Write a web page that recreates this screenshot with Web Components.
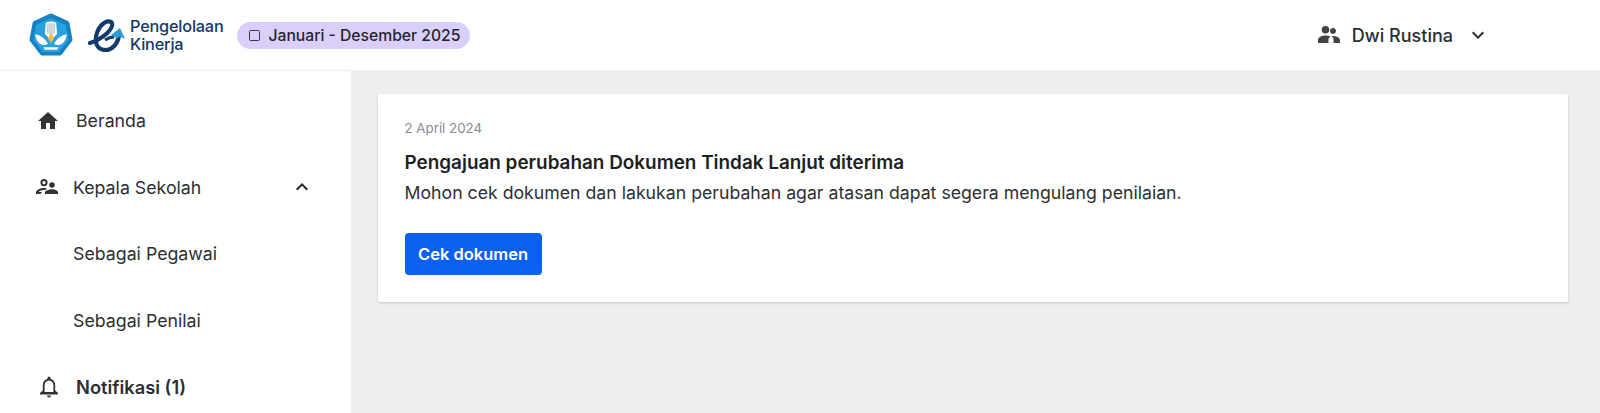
<!DOCTYPE html>
<html lang="id">
<head>
<meta charset="utf-8">
<title>Pengelolaan Kinerja</title>
<style>
  html, body { margin: 0; height: 100%; overflow: hidden; }
  body { font-family: Inter, "Liberation Sans", sans-serif; color: #26282b; background: #eee; }
</style>
</head>
<body>
<app-shell>
  <app-header slot="header"></app-header>
  <side-nav slot="nav">
    <nav-item icon="home" indent="36" gap="16">Beranda</nav-item>
    <nav-item icon="people-outline" indent="35" gap="14" chevron>Kepala Sekolah</nav-item>
    <nav-item indent="73">Sebagai Pegawai</nav-item>
    <nav-item indent="73">Sebagai Penilai</nav-item>
    <nav-item icon="bell" indent="37" gap="15" strong>Notifikasi (1)</nav-item>
  </side-nav>
  <notif-card slot="main"
    date="2 April 2024"
    title="Pengajuan perubahan Dokumen Tindak Lanjut diterima"
    action="Cek dokumen">Mohon cek dokumen dan lakukan perubahan agar atasan dapat segera mengulang penilaian.</notif-card>
</app-shell>

<script>
const ICONS = {
  home: '<path d="M10 20v-6h4v6h5v-8h3L12 3 2 12h3v8z"/>',
  'people-outline': '<path d="M9 4a3.6 3.6 0 1 1 0 7.2A3.6 3.6 0 0 1 9 4zm0 2a1.6 1.6 0 1 0 0 3.2A1.6 1.6 0 0 0 9 6zM17 7.2a2.8 2.8 0 1 1 0 5.6 2.8 2.8 0 0 1 0-5.6zM9 13c1.2 0 2.400.2 3.400.6-.9.5-1.600 1-2.100 1.500C9.900 15 9.500 15 9 15c-2.200 0-4.300.8-5.500 2H7l-1.500 2H1v-1.500C1 14.900 5.500 13 9 13zM17 14.200c2.800 0 6 1.300 6 3.100V19H10v-1.700c0-1.800 4.200-3.100 7-3.100z"/>',
  people: '<path d="M16 11c1.700 0 3-1.400 3-3s-1.300-3-3-3-3 1.400-3 3 1.300 3 3 3zM8.500 10.500a3.800 3.800 0 1 0 0-7.600 3.800 3.800 0 0 0 0 7.600zM8.500 12.500C5.600 12.500 1 14 1 16.800V20h10.500v-3.200c0-1.300.7-2.400 2-3.200-1.800-.8-3.700-1.100-5-1.100zM16 13c-.4 0-.9 0-1.300.1 1 .9 1.800 2 1.800 3.700V20H23v-3.200C23 14.400 18.600 13 16 13z"/>',
  bell: '<path fill-rule="evenodd" d="M12 1.500a1.500 1.500 0 0 1 1.500 1.500v.8c3 .7 4.700 3.400 4.700 6.500v5.200L21 18v1.500H3V18l2.800-2.500v-5.200c0-3.100 1.700-5.800 4.700-6.500V3A1.500 1.500 0 0 1 12 1.500zm0 4c-2.800 0-4.400 2.200-4.400 4.800v6.700h8.800v-6.700c0-2.600-1.600-4.800-4.400-4.800z"/><path d="M10 20.500h4a2 2 0 0 1-4 0z"/>',
  up: '<path d="M12 8l-6 6 1.400 1.400L12 10.800l4.600 4.600L18 14z"/>',
  down: '<path d="M12 16l6-6-1.400-1.400L12 13.200 7.400 8.600 6 10z"/>'
};
const svgIcon = (name, size) =>
  `<svg width="${size}" height="${size}" viewBox="0 0 24 24" fill="currentColor" aria-hidden="true">${ICONS[name]}</svg>`;

class AppShell extends HTMLElement {
  constructor() {
    super();
    this.attachShadow({ mode: 'open' }).innerHTML = `
      <style>
        :host { display: grid; grid-template: 71px 1fr / 351px 1fr; height: 413px; }
        .top { grid-column: 1 / -1; }
        .main { padding: 23px 32px 0 27px; }
      </style>
      <div class="top"><slot name="header"></slot></div>
      <div><slot name="nav"></slot></div>
      <div class="main"><slot name="main"></slot></div>
    `;
  }
}

class AppHeader extends HTMLElement {
  constructor() {
    super();
    this.attachShadow({ mode: 'open' }).innerHTML = `
      <style>
        :host {
          display: flex; align-items: center; height: 71px; box-sizing: border-box;
          background: #fff; border-bottom: 1px solid #eee; padding-left: 29px;
        }
        .brand { display: flex; align-items: center; }
        .app { display: flex; align-items: center; margin-left: 15px; gap: 5px; }
        .app-name { font-size: 16.300px; line-height: 18px; color: #123a6b; font-weight: 500; letter-spacing: -.2px; }
        .period {
          display: flex; align-items: center; gap: 8px; margin-left: 14px; height: 27px;
          padding: 0 9px 0 12px; border-radius: 14px; background: #dacffa;
          font-size: 15.700px; font-weight: 500; color: #23262e; white-space: nowrap;
        }
        .period i { width: 11px; height: 11px; box-sizing: border-box; border: 1.500px solid #3a3a46; border-radius: 1.500px; }
        .user { display: flex; align-items: center; margin-left: auto; margin-right: 110px; color: #2b2d31; }
        .user span { font-size: 18px; font-weight: 500; margin: 0 13px 0 11px; }
        .user svg { display: block; }
        .user .who { color: #444; }
      </style>
      <div class="brand">
        <svg width="44" height="44" viewBox="0 0 43 43" aria-hidden="true">
          <path d="M21.500 3 37 10 40 26 30 39H13L3 26 6 10z" fill="#1583c2" stroke="#1583c2" stroke-width="5" stroke-linejoin="round"/>
          <path d="M21.500 6 35 12.500 37.500 26 29 37H14L5.500 26 8 12.500z" fill="#2aa0de" stroke="#2aa0de" stroke-width="2" stroke-linejoin="round"/>
          <path d="M16.500 9.500c3-1.500 7-1.500 10 0l1 11-6 6-6-6z" fill="#fff"/>
          <path d="M18.500 10v10M20.500 10v12M22.500 10v12M24.500 10v10" stroke="#7f9db3" stroke-width=".8"/>
          <path d="M21.500 20l3 4.500-3 5-3-5z" fill="#f4bd35"/>
          <path d="M6 21c5 .5 9.500 3.500 12.500 9-2.500 2-6 1.500-8.500-.5-2-2-3.500-5-4-8.500zM37 21c-5 .5-9.500 3.500-12.500 9 2.500 2 6 1.500 8.500-.5 2-2 3.500-5 4-8.500z" fill="#fff"/>
          <path d="M14 33.500h15l-1.500 2.500H15.500z" fill="#fff"/>
        </svg>
        <div class="app">
          <svg width="37" height="33" viewBox="0 0 37 33" aria-hidden="true">
            <path d="M2 24C10 22 22 14 24 7 25 2 20 1 16 4 10 8 7 17 8 23 9 31 18 33 24 29 28 26 30 22 31 17" fill="none" stroke="#123a6b" stroke-width="4.200" stroke-linecap="round"/>
            <path d="M17 21c3-2 6-3 9-3" fill="none" stroke="#123a6b" stroke-width="3"/>
            <path d="M32 9l5 11-5-2.500-3 2-6-3.500z" fill="#2e9bd6"/>
          </svg>
          <div class="app-name">Pengelolaan<br>Kinerja</div>
        </div>
        <div class="period"><i></i>Januari - Desember 2025</div>
      </div>
      <div class="user">
        <div class="who">${svgIcon('people', 24)}</div>
        <span>Dwi Rustina</span>
        ${svgIcon('down', 24)}
      </div>
    `;
  }
}

class SideNav extends HTMLElement {
  constructor() {
    super();
    this.attachShadow({ mode: 'open' }).innerHTML = `
      <style>
        :host { display: flex; flex-direction: column; background: #fff; height: 342px; padding-top: 16.500px; box-sizing: border-box; overflow: hidden; }
      </style>
      <slot></slot>
    `;
  }
}

class NavItem extends HTMLElement {
  constructor() {
    super();
    const icon = this.getAttribute('icon');
    const strong = this.hasAttribute('strong');
    this.attachShadow({ mode: 'open' }).innerHTML = `
      <style>
        :host {
          display: flex; align-items: center; height: 66.500px; flex: none;
          padding-left: ${this.getAttribute('indent') || 0}px; padding-right: 37px;
          font-size: ${strong ? 18.300 : 17.750}px; color: #2d2f33; font-weight: ${strong ? 600 : 400};
        }
        .ic { display: flex; margin-right: ${this.getAttribute('gap') || 0}px; color: #333; }
        .chev { margin-left: auto; display: flex; color: #222; }
      </style>
      ${icon ? `<div class="ic">${svgIcon(icon, 24)}</div>` : ''}
      <slot></slot>
      ${this.hasAttribute('chevron') ? `<div class="chev">${svgIcon('up', 24)}</div>` : ''}
    `;
  }
}

class NotifCard extends HTMLElement {
  constructor() {
    super();
    this.attachShadow({ mode: 'open' }).innerHTML = `
      <style>
        :host {
          display: block; background: #fff; padding: 26px 27px 27px 26.500px; height: 208px; box-sizing: border-box;
          border-radius: 2px; box-shadow: 0 1px 3px rgba(0,0,0,.16);
        }
        .date { font-size: 13.300px; line-height: 16px; color: #8a8a8a; }
        h3 { margin: 15px 0 0; font-size: 18.900px; line-height: 24px; font-weight: 600; color: #1d1f22; }
        p { margin: 6px 0 0; font-size: 17.700px; line-height: 24px; color: #2d2f33; }
        button {
          display: block; margin-top: 28px; height: 42px; width: 137px; padding: 0; border: 0; border-radius: 4px;
          background: #0c60f0; color: #fff; font: 600 16.500px Inter, "Liberation Sans", sans-serif;
        }
      </style>
      <div class="date">${this.getAttribute('date')}</div>
      <h3>${this.getAttribute('title')}</h3>
      <p><slot></slot></p>
      <button>${this.getAttribute('action')}</button>
    `;
  }
}

customElements.define('app-shell', AppShell);
customElements.define('app-header', AppHeader);
customElements.define('side-nav', SideNav);
customElements.define('nav-item', NavItem);
customElements.define('notif-card', NotifCard);
</script>
</body>
</html>
